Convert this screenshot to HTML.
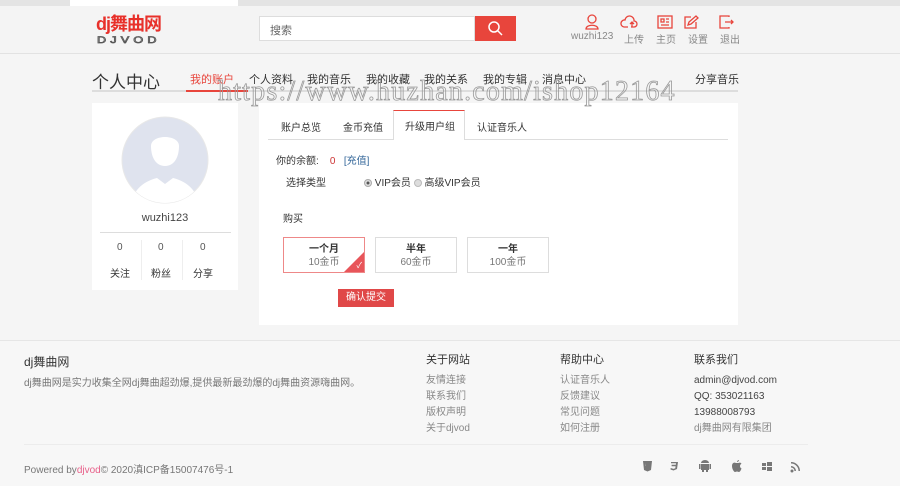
<!DOCTYPE html>
<html><head><meta charset="utf-8"><style>
*{margin:0;padding:0;box-sizing:border-box}
body{width:900px;height:486px;overflow:hidden;background:#f5f5f5;font-family:"Liberation Sans","Noto Sans CJK SC",sans-serif;color:#333;position:relative;font-size:12px}
.a{position:absolute;white-space:nowrap}
</style></head><body>
<div class="a" style="left:0;top:0;width:900px;height:6px;background:#e4e4e4"></div>
<div class="a" style="left:70px;top:0;width:168px;height:6px;background:#fff"></div>
<div class="a" style="left:0;top:6px;width:900px;height:48px;background:#f4f4f4;border-bottom:1px solid #e2e2e2"></div>
<div class="a" style="left:96px;top:13px;font-size:18px;font-weight:bold;color:#e8302a;letter-spacing:-1px;line-height:22px">dj舞曲网</div>
<div class="a" style="left:97px;top:36px;font-size:9px;line-height:9px;color:transparent;-webkit-text-stroke:0.7px #555;letter-spacing:3px;transform:scaleX(1.4);transform-origin:left">DJVOD</div>
<div class="a" style="left:259px;top:16px;width:216px;height:25px;background:#fff;border:1px solid #ddd;padding:5px 10px;font-size:11px;color:#666">搜索</div>
<div class="a" style="left:475px;top:16px;width:41px;height:25px;background:#e8453c"><svg width="41" height="25"><circle cx="19" cy="11" r="5" fill="none" stroke="#fff" stroke-width="1.5"/><path d="M23 15l4 4" stroke="#fff" stroke-width="1.5"/></svg></div>
<svg class="a" style="left:582px;top:14px" width="160" height="16" fill="none" stroke="#e8453c" stroke-width="1.3">
<circle cx="10" cy="5" r="4"/><path d="M4 15c0-5 12-5 12 0z"/>
<path d="M46 13h-4a3.5 3.5 0 0 1 1-7 4.5 4.5 0 0 1 9 1 3 3 0 0 1 0 6h-3M50 13V8M48 10l2-2 2 2"/>
<rect x="76" y="2" width="14" height="12"/><path d="M79 5h3v3h-3zM84 5h3M84 8h3M79 11h8"/>
<path d="M109 3h-6v11h11V8M106 11l1-3 7-6 2 2-7 6z"/>
<path d="M147 3v-1h-9v12h9v-1M143 8h8M149 6l2 2-2 2"/>
</svg>
<div class="a" style="left:571px;top:31px;font-size:10px;color:#888">wuzhi123</div>
<div class="a" style="left:624px;top:31px;font-size:10px;color:#888">上传</div>
<div class="a" style="left:656px;top:31px;font-size:10px;color:#888">主页</div>
<div class="a" style="left:688px;top:31px;font-size:10px;color:#888">设置</div>
<div class="a" style="left:720px;top:31px;font-size:10px;color:#888">退出</div>

<div class="a" style="left:92px;top:68px;font-size:17px;color:#333">个人中心</div>
<div class="a" style="left:92px;top:90px;width:646px;height:2px;background:#ddd"></div>
<div class="a" style="left:186px;top:90px;width:62px;height:2px;background:#e8453c"></div>
<div class="a" style="left:190px;top:71px;font-size:11px;color:#e8453c">我的账户</div>
<div class="a" style="left:249px;top:71px;font-size:11px">个人资料</div>
<div class="a" style="left:307px;top:71px;font-size:11px">我的音乐</div>
<div class="a" style="left:366px;top:71px;font-size:11px">我的收藏</div>
<div class="a" style="left:424px;top:71px;font-size:11px">我的关系</div>
<div class="a" style="left:483px;top:71px;font-size:11px">我的专辑</div>
<div class="a" style="left:542px;top:71px;font-size:11px">消息中心</div>
<div class="a" style="left:695px;top:71px;font-size:11px">分享音乐</div>

<div class="a" style="left:92px;top:103px;width:146px;height:187px;background:#fff"></div>
<svg class="a" style="left:121px;top:116px" width="88" height="88"><defs><clipPath id="c"><circle cx="44" cy="44" r="43"/></clipPath></defs><circle cx="44" cy="44" r="43" fill="#dfe3ee" stroke="#e8e8e8"/><g clip-path="url(#c)" fill="#fff"><path d="M30 30c0-12 28-12 28 0 0 10-4 20-14 20s-14-10-14-20z"/><path d="M10 90c2-20 18-26 26-28l8 6 8-6c8 2 24 8 26 28z"/></g></svg>
<div class="a" style="left:92px;top:212px;width:146px;text-align:center;font-size:11px;color:#444">wuzhi123</div>
<div class="a" style="left:100px;top:232px;width:131px;height:1px;background:#ddd"></div>
<div class="a" style="left:141px;top:240px;width:1px;height:40px;background:#eee"></div>
<div class="a" style="left:182px;top:240px;width:1px;height:40px;background:#eee"></div>
<div class="a" style="left:117px;top:242px;font-size:10px;color:#555">0</div>
<div class="a" style="left:158px;top:242px;font-size:10px;color:#555">0</div>
<div class="a" style="left:200px;top:242px;font-size:10px;color:#555">0</div>
<div class="a" style="left:110px;top:265px;font-size:10px">关注</div>
<div class="a" style="left:151px;top:265px;font-size:10px">粉丝</div>
<div class="a" style="left:193px;top:265px;font-size:10px">分享</div>

<div class="a" style="left:259px;top:103px;width:479px;height:222px;background:#fff"></div>
<div class="a" style="left:268px;top:139px;width:460px;height:1px;background:#ddd"></div>
<div class="a" style="left:393px;top:110px;width:72px;height:30px;background:#fff;border:1px solid #ddd;border-top:1px solid #e8453c;border-bottom:none"></div>
<div class="a" style="left:281px;top:119px;font-size:10px">账户总览</div>
<div class="a" style="left:343px;top:119px;font-size:10px">金币充值</div>
<div class="a" style="left:405px;top:118px;font-size:10px">升级用户组</div>
<div class="a" style="left:477px;top:119px;font-size:10px">认证音乐人</div>
<div class="a" style="left:276px;top:152px;font-size:10px">你的余额: &nbsp;&nbsp;&nbsp;<span style="color:#c33">0</span>&nbsp;&nbsp; <span style="color:#369">[充值]</span></div>
<div class="a" style="left:286px;top:174px;font-size:10px">选择类型</div>
<div class="a" style="left:364px;top:174px;font-size:10px"><span style="display:inline-block;width:8px;height:8px;border-radius:50%;border:1px solid #aaa;background:radial-gradient(#555 30%,#ddd 40%);vertical-align:-1px"></span> VIP会员 <span style="display:inline-block;width:8px;height:8px;border-radius:50%;border:1px solid #bbb;background:#ddd;vertical-align:-1px"></span> 高级VIP会员</div>
<div class="a" style="left:283px;top:210px;font-size:10px">购买</div>
<div class="a" style="left:283px;top:237px;width:82px;height:36px;border:1px solid #e88;text-align:center;font-size:10px;padding-top:5px;line-height:13px;overflow:hidden"><b>一个月</b><br><span style="color:#777">10金币</span><div style="position:absolute;right:0;bottom:0;width:0;height:0;border-left:20px solid transparent;border-bottom:20px solid #e8555a"></div><div style="position:absolute;right:2px;bottom:2px;color:#fff;font-size:8px;line-height:8px">✓</div></div>
<div class="a" style="left:375px;top:237px;width:82px;height:36px;border:1px solid #ddd;text-align:center;font-size:10px;padding-top:5px;line-height:13px"><b>半年</b><br><span style="color:#777">60金币</span></div>
<div class="a" style="left:467px;top:237px;width:82px;height:36px;border:1px solid #ddd;text-align:center;font-size:10px;padding-top:5px;line-height:13px"><b>一年</b><br><span style="color:#777">100金币</span></div>
<div class="a" style="left:338px;top:289px;width:56px;height:18px;background:#e04848;color:#fff;font-size:10px;text-align:center;line-height:18px">确认提交</div>

<div class="a" style="left:218px;top:76px;font-family:'Liberation Serif',serif;font-size:28px;color:transparent;-webkit-text-stroke:0.8px #999;letter-spacing:1.2px">https://www.huzhan.com/ishop12164</div>

<div class="a" style="left:0;top:340px;width:900px;height:146px;background:#f7f7f7;border-top:1px solid #e6e6e6"></div>
<div class="a" style="left:24px;top:353px;font-size:12px">dj舞曲网</div>
<div class="a" style="left:24px;top:374px;font-size:10px;color:#777">dj舞曲网是实力收集全网dj舞曲超劲爆,提供最新最劲爆的dj舞曲资源嗨曲网。</div>
<div class="a" style="left:426px;top:353px;font-size:11px;line-height:14px">关于网站</div>
<div class="a" style="left:426px;top:373px;font-size:10px;color:#888;line-height:16px">友情连接<br>联系我们<br>版权声明<br>关于djvod</div>
<div class="a" style="left:560px;top:353px;font-size:11px;line-height:14px">帮助中心</div>
<div class="a" style="left:560px;top:373px;font-size:10px;color:#888;line-height:16px">认证音乐人<br>反馈建议<br>常见问题<br>如何注册</div>
<div class="a" style="left:694px;top:353px;font-size:11px;line-height:14px">联系我们</div>
<div class="a" style="left:694px;top:373px;font-size:10px;color:#444;line-height:16px">admin@djvod.com<br>QQ: 353021163<br>13988008793<br><span style="color:#888">dj舞曲网有限集团</span></div>
<div class="a" style="left:24px;top:444px;width:784px;height:1px;background:#ececec"></div>
<div class="a" style="left:24px;top:461px;font-size:10px;color:#777">Powered by<span style="color:#e8608a">djvod</span>© 2020滇ICP备15007476号-1</div>
<svg class="a" style="left:640px;top:458px" width="165" height="16" fill="#777">
<path d="M3 3h9l-1 9-3.5 1.5L4 12zM5 5l.3 3h4l-.2 2-1.6.6-1.6-.6"/>
<path d="M31 4h7l-1 7-3.5 1.5-3-1 .2-1.5 2.8.9 1.8-.7.3-2h-4v-1.5h4.2l.2-1.5h-5z"/>
<path d="M61 6h8v6h-8zM59 6h1.5v5H59zM69.5 6H71v5h-1.5zM62 12h2v2h-2zM66 12h2v2h-2zM61 5a4 3 0 0 1 8 0z"/>
<path d="M96 5c-2-1-4 0-4 3s2 6 3 6 1-.5 2-.5 1 .5 2 .5 2-2 2.5-3.5c-1-.5-1.5-1.5-1.5-2.5s.8-2 1.5-2.5c-1-1-2-1-3-.5zM97 4c0-1 1-2 2-2 0 1-1 2-2 2z"/>
<path d="M122 5h4v3h-4zM127 4h5v4h-5zM122 9h4v3h-4zM127 9h5v4h-5z"/>
<circle cx="152" cy="13" r="1.5"/><path d="M151 8a5 5 0 0 1 5 5h-1.5a3.5 3.5 0 0 0-3.5-3.5zM151 4a9 9 0 0 1 9 9h-1.5a7.5 7.5 0 0 0-7.5-7.5z"/>
</svg>
</body></html>
